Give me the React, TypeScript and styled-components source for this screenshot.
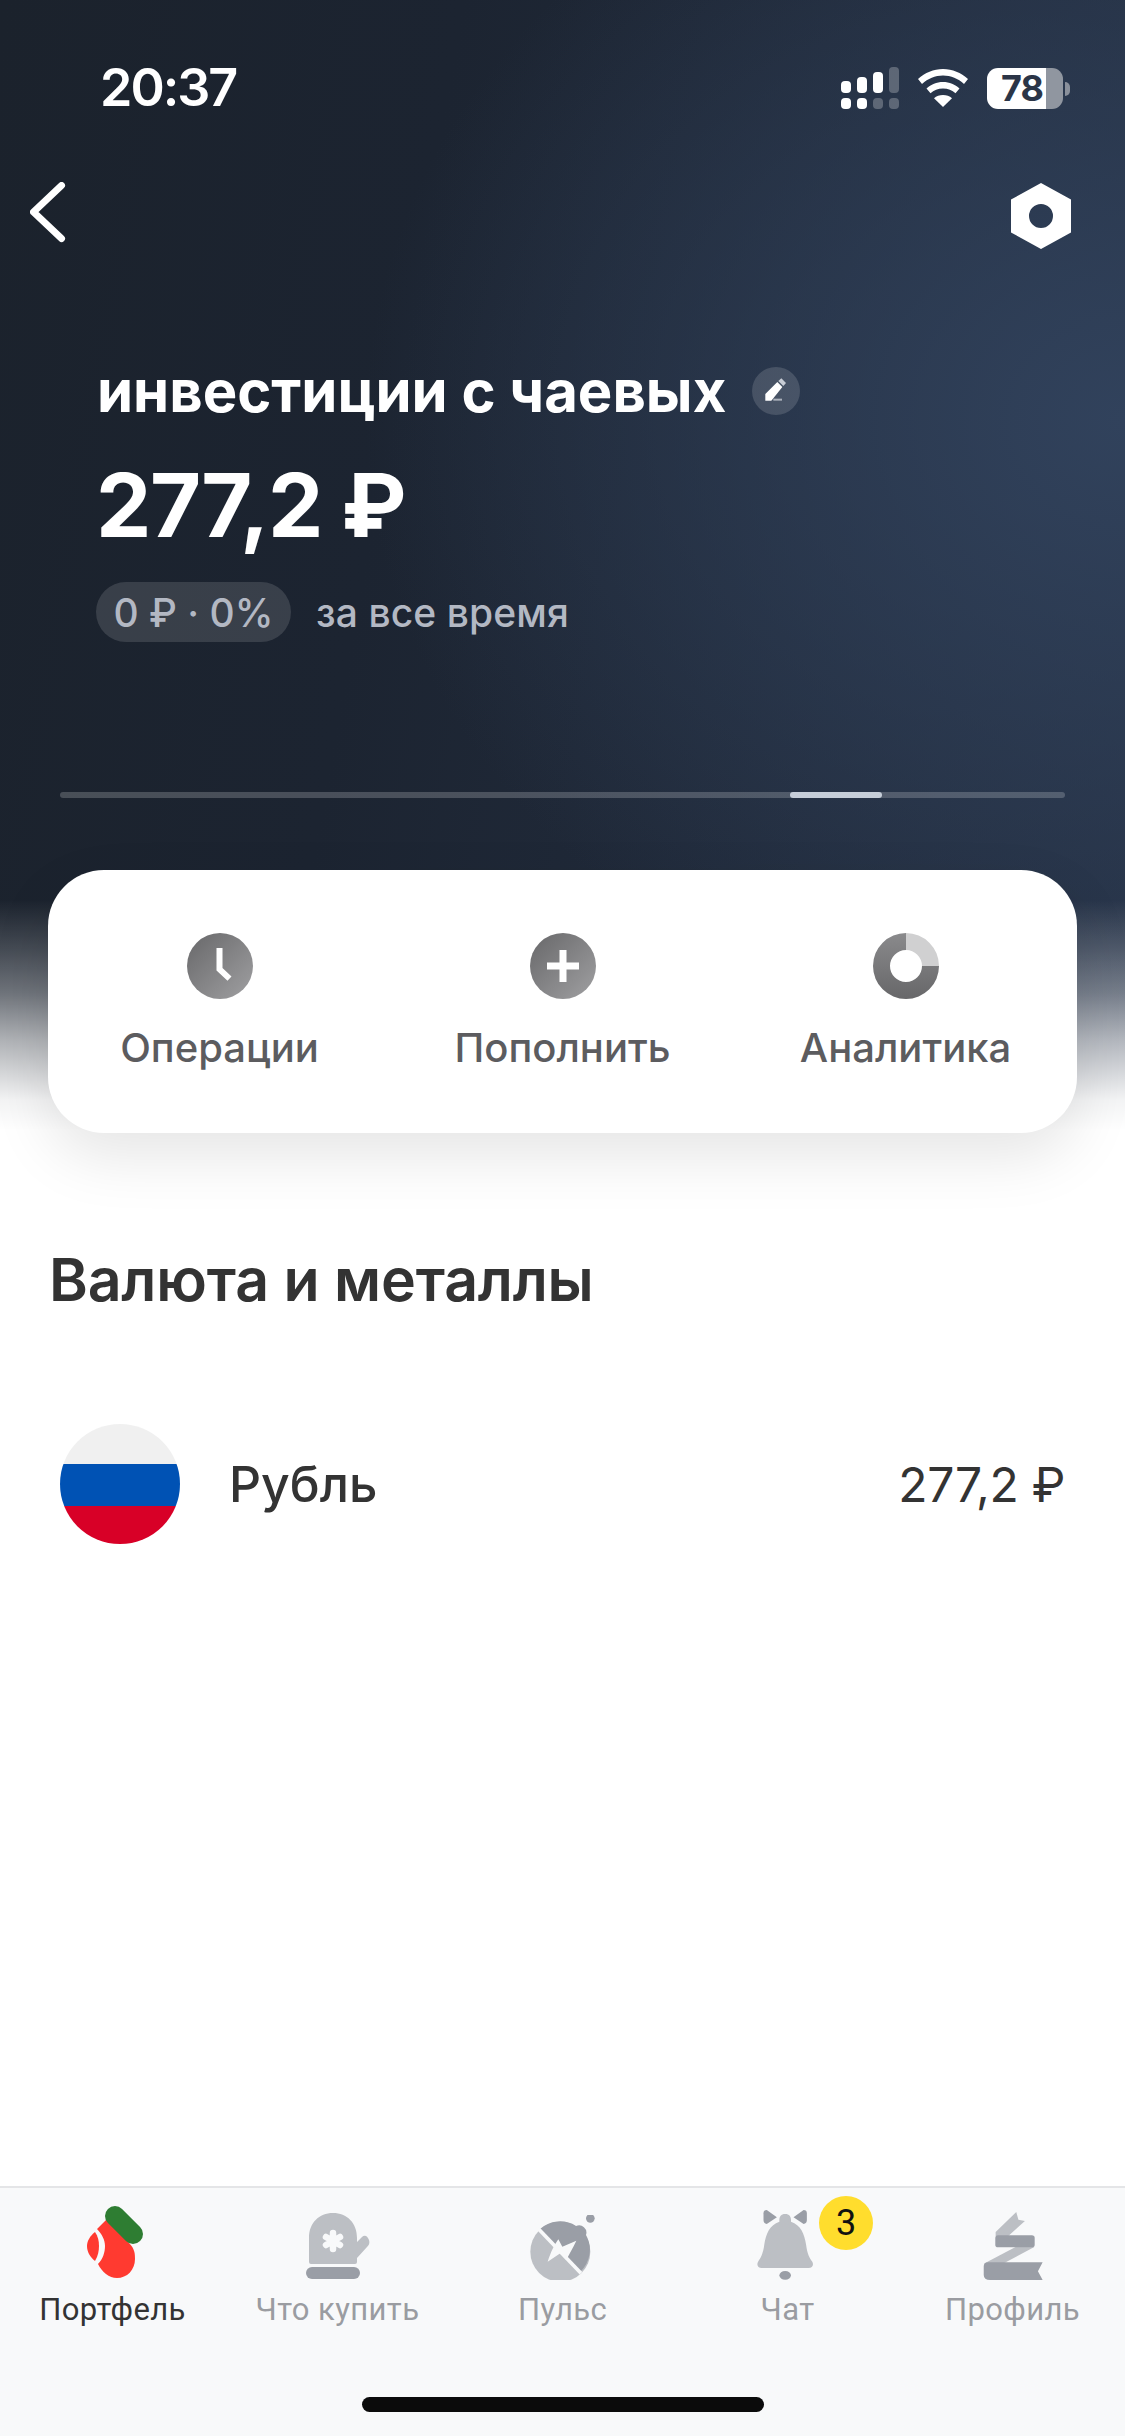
import React from 'react';
import styled, { createGlobalStyle } from 'styled-components';

const Global = createGlobalStyle`
  html, body { margin: 0; padding: 0; background: #fff; }
  * { box-sizing: border-box; }
`;

const Page = styled.div`
  width: 1125px;
  height: 2436px;
  display: flex;
  flex-direction: column;
  overflow: hidden;
  background: #fff;
  font-family: Inter, "Noto Sans", sans-serif;
`;

const Hero = styled.header`
  height: 1130px;
  flex: none;
  display: flex;
  flex-direction: column;
  background:
    linear-gradient(to bottom, rgba(255,255,255,0) 0, rgba(255,255,255,0) 900px, rgba(255,255,255,.19) 950px, rgba(255,255,255,.37) 993px, rgba(255,255,255,.65) 1040px, rgba(255,255,255,.95) 1100px, #fff 1130px),
    radial-gradient(ellipse 760px 640px at 1125px 420px, #31425c 0%, rgba(49,66,92,0) 100%),
    linear-gradient(100deg, #1b222c 0%, #1c2431 35%, #263246 100%);
`;

const StatusBar = styled.div`
  height: 68px;
  margin-top: 54px;
  padding: 0 62px 0 100px;
  display: flex;
  align-items: center;
  justify-content: space-between;
  flex: none;
`;

const Time = styled.span`
  font-size: 52px;
  font-weight: 600;
  letter-spacing: -2px;
  color: #fff;
  line-height: 40px;
`;

const StatusIcons = styled.div`
  display: flex;
  align-items: center;
  gap: 19px;
`;

const Battery = styled.div`
  position: relative;
  width: 76px;
  height: 41px;
  border-radius: 11px;
  background: linear-gradient(to right, #fff 0, #fff 59px, #9096a0 59px, #9096a0 100%);
  color: #2b3547;
  font-size: 36px;
  font-weight: 700;
  line-height: 41px;
  padding-left: 14px;
  letter-spacing: -1px;
  &::after {
    content: '';
    position: absolute;
    left: 78px;
    top: 14px;
    width: 5px;
    height: 14px;
    border-radius: 0 7px 7px 0;
    background: #8a909b;
  }
`;

const Nav = styled.nav`
  display: flex;
  justify-content: space-between;
  align-items: center;
  padding: 0 54px 0 30px;
  margin-top: 60px;
  height: 68px;
  flex: none;
`;

const TitleRow = styled.div`
  display: flex;
  align-items: center;
  gap: 26px;
  padding-left: 97px;
  margin-top: 108px;
`;

const Title = styled.h1`
  margin: 0;
  font-size: 58px;
  font-weight: 700;
  line-height: 66px;
  letter-spacing: 0;
  color: #fff;
`;

const EditBtn = styled.span`
  width: 48px;
  height: 48px;
  border-radius: 50%;
  background: rgba(255,255,255,.14);
  display: flex;
`;

const Amount = styled.div`
  font-size: 88px;
  font-weight: 700;
  line-height: 104px;
  letter-spacing: -1.500px;
  color: #fff;
  padding-left: 96px;
  margin-top: 29px;
`;

const ChangeRow = styled.div`
  display: flex;
  align-items: center;
  gap: 25px;
  padding-left: 96px;
  margin-top: 25px;
`;

const Pill = styled.span`
  height: 60px;
  width: 195px;
  justify-content: center;
  border-radius: 30px;
  background: rgba(255,255,255,.13);
  display: flex;
  align-items: center;
  font-size: 39px;
  font-weight: 500;
  color: #b3b8c3;
`;

const Muted = styled.span`
  font-size: 39px;
  font-weight: 500;
  letter-spacing: .1px;
  color: #b3b8c3;
`;

const Progress = styled.div`
  position: relative;
  margin: 150px 60px 0;
  height: 6px;
  border-radius: 3px;
  background: rgba(255,255,255,.2);
  flex: none;
`;

const Thumb = styled.div`
  position: absolute;
  left: 730px;
  top: 0;
  width: 92px;
  height: 6px;
  border-radius: 3px;
  background: #c6ced9;
`;

const ActionCard = styled.section`
  margin: -260px 48px 0;
  height: 263px;
  flex: none;
  position: relative;
  border-radius: 56px;
  background: #fff;
  box-shadow: 0 24px 60px rgba(0,0,0,.1);
  display: grid;
  grid-template-columns: repeat(3, 343px);
  padding-top: 63px;
`;

const Action = styled.div`
  display: flex;
  flex-direction: column;
  align-items: center;
  gap: 26px;
`;

const ActionLabel = styled.span`
  font-size: 40px;
  font-weight: 500;
  line-height: 46px;
  color: #5c5c5f;
`;

const Section = styled.section`
  padding: 0 60px 0 49px;
`;

const Heading = styled.h2`
  margin: 112px 0 0;
  font-size: 59px;
  font-weight: 600;
  line-height: 70px;
  letter-spacing: -.2px;
  color: #333;
`;

const AssetRow = styled.div`
  display: flex;
  align-items: center;
  margin-top: 109px;
  padding-left: 11px;
`;

const Flag = styled.div`
  width: 120px;
  height: 120px;
  border-radius: 50%;
  flex: none;
  background: linear-gradient(to bottom, #f0f0f0 0, #f0f0f0 40px, #0052b4 40px, #0052b4 82px, #d80027 82px, #d80027 100%);
`;

const AssetName = styled.span`
  margin-left: 49px;
  font-size: 50px;
  font-weight: 500;
  color: #333;
`;

const AssetValue = styled.span`
  margin-left: auto;
  font-size: 48px;
  font-weight: 400;
  letter-spacing: -.3px;
  color: #333;
`;

const TabBar = styled.footer`
  margin-top: auto;
  height: 250px;
  flex: none;
  position: relative;
  background: #f8f9fa;
  border-top: 2px solid #e4e5e7;
  display: grid;
  grid-template-columns: repeat(5, 225px);
`;

const Tab = styled.div`
  position: relative;
  display: flex;
  flex-direction: column;
  align-items: center;
  padding-top: 16px;
`;

const TabIcon = styled.div<{ $shift?: number }>`
  height: 76px;
  display: flex;
  align-items: flex-end;
  justify-content: center;
  margin-right: ${(p) => p.$shift ?? 0}px;
`;

const TabLabel = styled.span<{ $active?: boolean }>`
  font-family: Roboto, Inter, sans-serif;
  margin-top: 12px;
  font-size: 31px;
  line-height: 36px;
  letter-spacing: .4px;
  color: ${(p) => (p.$active ? '#333' : '#9a9ca1')};
`;

const Badge = styled.span`
  position: absolute;
  left: 144px;
  top: 8px;
  width: 54px;
  height: 54px;
  border-radius: 50%;
  background: #ffdd2d;
  color: #111;
  font-family: Roboto, Inter, sans-serif;
  font-size: 36px;
  line-height: 54px;
  text-align: center;
`;

const HomeIndicator = styled.div`
  position: absolute;
  left: 362px;
  top: 209px;
  width: 402px;
  height: 15px;
  border-radius: 8px;
  background: #0b0b0b;
`;

const Signal = () => (
  <svg width="58" height="42" viewBox="0 0 58 42" fill="#fff">
    <rect x="0" y="14" width="10" height="12" rx="4" />
    <rect x="16" y="10" width="10" height="16" rx="4" />
    <rect x="32" y="5" width="10" height="21" rx="4" />
    <rect x="48" y="0" width="10" height="26" rx="4" opacity=".25" />
    <rect x="0" y="31" width="10" height="11" rx="4" />
    <rect x="16" y="31" width="10" height="11" rx="4" />
    <rect x="32" y="31" width="10" height="11" rx="4" opacity=".25" />
    <rect x="48" y="31" width="10" height="11" rx="4" opacity=".25" />
  </svg>
);

const Wifi = () => (
  <svg width="50" height="38" viewBox="0 0 50 38" fill="#fff">
    <path d="M25 0C15.500 0 7 3.800 0 10l4 5C10 9.500 17 6.500 25 6.500S40 9.500 46 15l4-5C43 3.800 34.500 0 25 0z" />
    <path d="M25 13c-6.500 0-12 2.500-16.500 6.500l4 4.800C15.800 21.300 20 19.600 25 19.600s9.200 1.700 12.500 4.700l4-4.800C37 15.500 31.500 13 25 13z" />
    <path d="M25 26c-3.500 0-6.500 1.200-9 3.200L25 38l9-8.800C31.500 27.200 28.500 26 25 26z" />
  </svg>
);

const Back = () => (
  <svg width="38" height="68" viewBox="0 0 38 68" fill="none">
    <path d="M31.500 3.500 3.500 30l28 26.500" stroke="#fff" strokeWidth="7" strokeLinecap="round" strokeLinejoin="round" />
  </svg>
);

const Nut = () => (
  <svg width="60" height="66" viewBox="0 0 60 66">
    <path fillRule="evenodd" fill="#fff" d="M30 0 60 16.500V49.500L30 66 0 49.500V16.500zM30 21a12 12 0 1 0 0 24 12 12 0 0 0 0-24z" />
  </svg>
);

const Pencil = () => (
  <svg width="48" height="48" viewBox="36 27 144 144">
    <path fill="#fff" d="M76 128v-20l36-36 15 15-33 41z" />
    <path fill="#c7ccd4" d="M115 69l9-8 14 14-8 9z" />
    <rect x="100" y="122" width="26" height="6" fill="#aab0bb" />
  </svg>
);

const GreyGrad = ({ id }: { id: string }) => (
  <defs>
    <linearGradient id={id} x1="0" y1="0" x2="1" y2="1">
      <stop offset="0" stopColor="#676769" />
      <stop offset="1" stopColor="#a0a0a2" />
    </linearGradient>
  </defs>
);

const ClockIcon = () => (
  <svg width="66" height="66" viewBox="0 0 66 66">
    <GreyGrad id="g1" />
    <circle cx="33" cy="33" r="33" fill="url(#g1)" />
    <path d="M29.500 15h6v20l9 8.500-4 4.200L29.500 37.500z" fill="#fff" />
  </svg>
);

const PlusIcon = () => (
  <svg width="66" height="66" viewBox="0 0 66 66">
    <GreyGrad id="g2" />
    <circle cx="33" cy="33" r="33" fill="url(#g2)" />
    <path d="M29.500 17h7v12.500H49v7H36.500V49h-7V36.500H17v-7h12.500z" fill="#fff" />
  </svg>
);

const DonutIcon = () => (
  <svg width="66" height="66" viewBox="0 0 66 66" fill="none">
    <defs>
      <linearGradient id="g3" x1="0" y1="0" x2="0" y2="1">
        <stop offset="0" stopColor="#8a8a8c" />
        <stop offset="1" stopColor="#676769" />
      </linearGradient>
    </defs>
    <path fillRule="evenodd" d="M33 0a33 33 0 1 0 33 33H49a16 16 0 1 1-16-16z" fill="url(#g3)" />
    <path d="M33 0a33 33 0 0 1 33 33H49a16 16 0 0 0-16-16z" fill="#d0d0d1" />
  </svg>
);

const Stocking = () => (
  <svg width="60" height="76" viewBox="0 0 60 76">
    <path fill="#ff3a30" d="M23 14 44 39C50 45 50 50 50 55 50 66 42 74 32 74 24 74 17 68 13 60 18 55 20 48 20 42 20 36 17 30 12 25Z" />
    <path fill="#ff3a30" d="M10 28C5 32 2 37 2 42 2 48 5 53 10 57 13 52 14 47 14 42 14 37 13 32 10 28Z" />
    <path d="M30 12 48 30" stroke="#2e7d32" strokeWidth="20" strokeLinecap="round" />
  </svg>
);

const Mitten = () => (
  <svg width="66" height="68" viewBox="0 0 66 68">
    <path fill="#bcbfc4" d="M4 26C4 11 14 1 28 1 42 1 52 11 52 26V30L57 25C60 22 63 25 64 28 65 31 64 33 62 35L52 46V50A2 2 0 0 1 50 52H6A2 2 0 0 1 4 50Z" />
    <rect x="1" y="55" width="54" height="12" rx="6" fill="#9a9ea6" />
    <path d="M28 21v16M21 25l14 8M35 25l-14 8" stroke="#f8f9fa" strokeWidth="6.500" strokeLinecap="round" />
  </svg>
);

const Pulse = () => (
  <svg width="72" height="65" viewBox="78 55 216 195">
    <circle cx="178" cy="165" r="90" fill="#bcbfc4" />
    <path fill="#9a9ea6" d="M116 98A90 90 0 0 1 225 88a22 22 0 0 1 30 27A90 90 0 0 1 238 225Z" />
    <circle cx="268" cy="65" r="13" fill="#9a9ea6" />
    <path d="M112 96 240 230" stroke="#f8f9fa" strokeWidth="11" />
    <path fill="#f8f9fa" d="M140 195C150 165 160 145 172 128L184 150 226 132C215 155 205 172 196 190L178 170Z" />
  </svg>
);

const Bell = () => (
  <svg width="56" height="70" viewBox="545 120 155 210" preserveAspectRatio="none">
    <path fill="#9a9ea6" d="M572 120 600 142 572 162Q563 160 563 150V130Q563 120 572 120Z" />
    <path fill="#9a9ea6" d="M674 120 646 142 674 162Q683 160 683 150V130Q683 120 674 120Z" />
    <path fill="#bcbfc4" d="M623 132C610 132 606 142 607 155 580 165 570 190 565 225 562 250 555 265 548 275 543 285 548 294 558 294H688C698 294 703 285 698 275 690 265 684 250 681 225 676 190 666 165 639 155 640 142 636 132 623 132Z" />
    <ellipse cx="623" cy="316" rx="16" ry="13" fill="#9a9ea6" />
  </svg>
);

const Ribbon = () => (
  <svg width="60" height="68" viewBox="1170 125 166 204" preserveAspectRatio="none">
    <path fill="#bcbfc4" d="M1205 197V185L1262 125 1268 148 1286 152 1240 197Z" />
    <path fill="#bcbfc4" d="M1172 280 1260 230H1312L1225 280Z" />
    <rect x="1204" y="195" width="109" height="36" rx="8" fill="#9a9ea6" />
    <path fill="#9a9ea6" d="M1185 276H1335L1322 303 1335 329H1190Q1172 329 1172 314V288Q1172 276 1185 276Z" />
  </svg>
);

export default function App() {
  return (
    <Page>
      <Global />
      <Hero>
        <StatusBar>
          <Time>20:37</Time>
          <StatusIcons>
            <Signal />
            <Wifi />
            <Battery>78</Battery>
          </StatusIcons>
        </StatusBar>
        <Nav>
          <Back />
          <Nut />
        </Nav>
        <TitleRow>
          <Title>инвестиции с чаевых</Title>
          <EditBtn><Pencil /></EditBtn>
        </TitleRow>
        <Amount>277,2 ₽</Amount>
        <ChangeRow>
          <Pill>0 ₽ · 0%</Pill>
          <Muted>за все время</Muted>
        </ChangeRow>
        <Progress><Thumb /></Progress>
      </Hero>
      <ActionCard>
        <Action><ClockIcon /><ActionLabel>Операции</ActionLabel></Action>
        <Action><PlusIcon /><ActionLabel>Пополнить</ActionLabel></Action>
        <Action><DonutIcon /><ActionLabel>Аналитика</ActionLabel></Action>
      </ActionCard>
      <Section>
        <Heading>Валюта и металлы</Heading>
        <AssetRow>
          <Flag />
          <AssetName>Рубль</AssetName>
          <AssetValue>277,2 ₽</AssetValue>
        </AssetRow>
      </Section>
      <TabBar>
        <Tab><TabIcon $shift={-4}><Stocking /></TabIcon><TabLabel $active>Портфель</TabLabel></Tab>
        <Tab><TabIcon><Mitten /></TabIcon><TabLabel>Что купить</TabLabel></Tab>
        <Tab><TabIcon><Pulse /></TabIcon><TabLabel>Пульс</TabLabel></Tab>
        <Tab><TabIcon $shift={6}><Bell /></TabIcon><TabLabel>Чат</TabLabel><Badge>3</Badge></Tab>
        <Tab><TabIcon><Ribbon /></TabIcon><TabLabel>Профиль</TabLabel></Tab>
        <HomeIndicator />
      </TabBar>
    </Page>
  );
}
